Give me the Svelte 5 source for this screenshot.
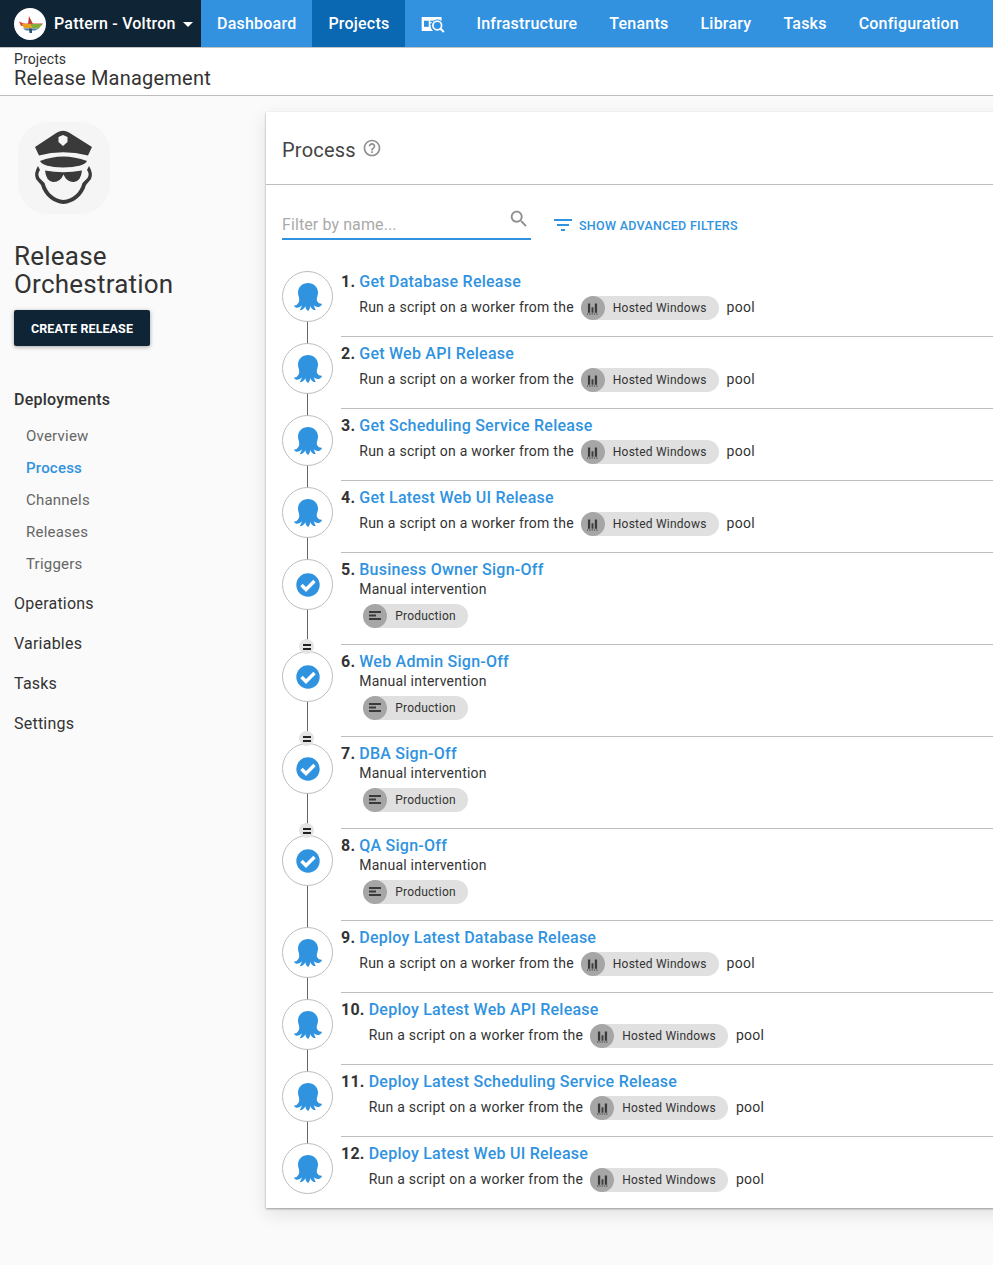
<script>
  const nav = ['Dashboard', 'Projects', '__icon', 'Infrastructure', 'Tenants', 'Library', 'Tasks', 'Configuration'];
  const run = (title) => ({ title, kind: 'run' });
  const manual = (title, parallel = false) => ({ title, kind: 'manual', parallel });
  const steps = [
    run('Get Database Release'),
    run('Get Web API Release'),
    run('Get Scheduling Service Release'),
    run('Get Latest Web UI Release'),
    manual('Business Owner Sign-Off'),
    manual('Web Admin Sign-Off', true),
    manual('DBA Sign-Off', true),
    manual('QA Sign-Off', true),
    run('Deploy Latest Database Release'),
    run('Deploy Latest Web API Release'),
    run('Deploy Latest Scheduling Service Release'),
    run('Deploy Latest Web UI Release')
  ];
  const subnav = ['Overview', 'Process', 'Channels', 'Releases', 'Triggers'];
  const others = ['Operations', 'Variables', 'Tasks', 'Settings'];
</script>

<div class="page">
  <header class="topbar">
    <div class="brand">
      <span class="logo">
        <svg viewBox="0 0 32 32" width="32" height="32">
          <circle cx="16" cy="16" r="16" fill="#fff" />
          <path d="M15 8 L17 12 L19 16 H14 Z" fill="#b8433a" />
          <path d="M5 13.500 L10 15.500 H29 L27 18 H7 Z" fill="#e0483a" />
          <path d="M8 16 H17 L18 20.500 H10 Z" fill="#e8a020" />
          <path d="M17 16 H28 L25 20.500 H18 Z" fill="#7fae3c" />
          <path d="M9 20.500 H25 L21 22.500 H12 Z" fill="#4f7fb0" />
          <path d="M15 20.500 H18 V25 H15.500 Z" fill="#33506e" />
        </svg>
      </span>
      <span class="brand-name">Pattern - Voltron</span>
      <span class="caret"></span>
    </div>
    <nav class="nav">
      {#each nav as item}
        {#if item === '__icon'}
          <span class="nav-item icon-item">
            <svg viewBox="0 0 24 18" width="24" height="17">
              <path d="M0 1 H21 V5.200 A7 7 0 0 0 12 16 H0 Z" fill="#fff" />
              <rect x="2.500" y="5" width="5" height="6.500" fill="#3292df" />
              <rect x="9" y="5" width="3.500" height="1.500" fill="#3292df" />
              <rect x="9" y="8" width="3" height="1.500" fill="#3292df" />
              <circle cx="16.500" cy="10" r="4.600" fill="none" stroke="#fff" stroke-width="1.800" />
              <path d="M20 13.500 L23.500 17" stroke="#fff" stroke-width="2.200" />
            </svg>
          </span>
        {:else}
          <span class="nav-item" class:active={item === 'Projects'}>{item}</span>
        {/if}
      {/each}
    </nav>
  </header>

  <div class="crumbs">
    <div class="crumb">Projects</div>
    <div class="crumb-title">Release Management</div>
  </div>

  <div class="content">
    <aside class="side">
      <div class="avatar">
        <svg viewBox="0 0 92 92" width="92" height="92">
          <rect width="92" height="92" rx="30" fill="#f5f5f5" />
          <path d="M17 25 L39 10.500 Q45 7 51 10.500 L74 25 L70 33.500 Q45 27 21 33.500 Z" fill="#3a3a3a" />
          <path d="M45 13 L49.500 15 V20 L45 24 L40.500 20 V15 Z" fill="#f5f5f5" />
          <path d="M22 39 Q45 30 69 39 Q66 45 45 45.500 Q25 45 22 39 Z" fill="#3a3a3a" />
          <path d="M27 48.500 Q45 52 64 48.500 Q63 59 56 60 Q49 60.500 45.500 52.500 Q42 60.500 35 60 Q28 59 27 48.500 Z" fill="#3a3a3a" />
          <path d="M20 44 Q15.500 51 18 57 L23 63 C26 74 36 81.500 45.500 82 C55 81.500 65 74 68 63 L73 57 Q75.500 51 71 44 L69 48 Q72 52 69.500 56 L64.500 61 C62 71 54 77.500 45.500 78 C37 77.500 29 71 26.500 61 L21.500 56 Q19 52 22 48 Z" fill="#3a3a3a" />
        </svg>
      </div>
      <h1 class="project">Release<br />Orchestration</h1>
      <button class="create">CREATE RELEASE</button>
      <div class="menu-head">Deployments</div>
      <ul class="sub">
        {#each subnav as s}
          <li class:current={s === 'Process'}>{s}</li>
        {/each}
      </ul>
      <ul class="others">
        {#each others as o}
          <li>{o}</li>
        {/each}
      </ul>
    </aside>

    <main class="card">
      <div class="card-head">
        <span class="card-title">Process</span>
        <svg class="help" viewBox="0 0 24 24" width="20" height="20">
          <path d="M11 18h2v-2h-2v2zm1-16C6.480 2 2 6.480 2 12s4.480 10 10 10 10-4.480 10-10S17.520 2 12 2zm0 18c-4.410 0-8-3.590-8-8s3.590-8 8-8 8 3.590 8 8-3.590 8-8 8zm0-14c-2.210 0-4 1.790-4 4h2c0-1.100.9-2 2-2s2 .9 2 2c0 2-3 1.750-3 5h2c0-2.250 3-2.500 3-5 0-2.210-1.790-4-4-4z" fill="#8f8f8f" />
        </svg>
      </div>
      <div class="filters">
        <div class="filter-input">
          <span class="placeholder">Filter by name...</span>
          <svg viewBox="0 0 24 24" class="search">
            <path d="M15.500 14h-.790l-.280-.270C15.410 12.590 16 11.110 16 9.500 16 5.910 13.090 3 9.500 3S3 5.910 3 9.500 5.910 16 9.500 16c1.610 0 3.090-.590 4.230-1.570l.270.280v.790l5 4.990L20.490 19l-4.990-5zm-6 0C7.010 14 5 11.990 5 9.500S7.010 5 9.500 5 14 7.010 14 9.500 11.990 14 9.500 14z" fill="#8f8f8f" />
          </svg>
        </div>
        <div class="advanced">
          <svg viewBox="3 6 18 12" width="18" height="12"><path d="M10 18h4v-2h-4v2zM3 6v2h18V6H3zm3 7h12v-2H6v2z" fill="#2f93e0" /></svg>
          <span>SHOW ADVANCED FILTERS</span>
        </div>
      </div>

      <div class="steps">
        {#each steps as step, i}
          <div class="step">
            <div class="rail" class:last={i === steps.length - 1} class:first={i === 0}>
              {#if step.parallel}<span class="par"><i></i><i></i></span>{/if}
              <span class="circle">
                {#if step.kind === 'run'}
                  <svg viewBox="0 0 28 28" width="28" height="28">
                    <path d="M14 0 C19.500 0 24 4 24 9.500 C24 12.500 22.500 14.500 22.800 17 C23.100 19.500 25.500 21 28 20.800 C27.800 22.800 25.500 24.500 23 24 C21.800 23.800 20.900 23.200 20 22.300 C20.200 24 20.800 25.600 21.800 27 C19.500 27.500 17.300 26 16.300 23 C16 25 15.500 26.800 14 28 C12.200 26.800 11.500 25 11.300 23 C10.500 25.500 8.500 27.300 5.500 27.300 C6.700 25.800 7.500 24.200 7.800 22.300 C6.600 23.700 4.800 24.800 2.800 24.700 C1.500 24.600 .4 23.800 0 22.500 C2.500 22.800 4.800 20.500 5.200 17.500 C5.500 14.500 4 12.500 4 9.500 C4 4 8.500 0 14 0 Z" fill="#2f93e0" />
                  </svg>
                {:else}
                  <svg viewBox="0 0 24 24" width="24" height="24">
                    <circle cx="12" cy="12" r="11.700" fill="#2f93e0" />
                    <path d="M5.500 12 L10 16.500 L18.500 8" fill="none" stroke="#fff" stroke-width="3.400" />
                  </svg>
                {/if}
              </span>
            </div>
            <div class="body" class:tall={step.kind === 'manual'}>
              <span class="num">{i + 1}.</span>
              <div class="detail">
                <div class="title">{step.title}</div>
                {#if step.kind === 'run'}
                  <div class="desc">
                    <span class="desc-text">Run a script on a worker from the</span>
                    <span class="pill">
                      <span class="pill-icon">
                        <svg viewBox="0 0 12 14" width="11" height="13">
                          <path d="M1 1.500 H3.500 V11.500 H1 Z M5 5.500 H7 V11.500 H5 Z M8.500 1.500 H11 V11.500 H8.500 Z" fill="#3a3a3a" />
                          <path d="M0 13 H12" stroke="#3a3a3a" stroke-width="1" stroke-dasharray="1.500 1" />
                        </svg>
                      </span>
                      <span>Hosted Windows</span>
                    </span>
                    <span class="desc-text pool">pool</span>
                  </div>
                {:else}
                  <div class="manual">Manual intervention</div>
                  <div class="env">
                    <span class="pill">
                      <span class="pill-icon">
                        <svg viewBox="0 0 14 12" width="14" height="12">
                          <path d="M1 1 H13 V3 H1 Z M1 4.500 H8 V6.500 H1 Z M1 8 H13 V10 H1 Z" fill="#3a3a3a" />
                        </svg>
                      </span>
                      <span>Production</span>
                    </span>
                  </div>
                {/if}
              </div>
            </div>
          </div>
        {/each}
      </div>
    </main>
  </div>
</div>

<style>
  :global(body) {
    margin: 0;
    background: #fafafa;
    overflow: hidden;
  }
  .page {
    width: 993px;
    height: 1265px;
    overflow: hidden;
    font-family: Roboto, "Liberation Sans", sans-serif;
    letter-spacing: 0.22px;
    color: #333;
    background: #fafafa;
  }
  .topbar {
    display: flex;
    height: 47px;
    background: #3292df;
    color: #fff;
    font-size: 16px;
    font-weight: 500;
  }
  .brand {
    display: flex;
    align-items: center;
    width: 201px;
    flex: none;
    box-sizing: border-box;
    padding-left: 14px;
    background: #0f2535;
  }
  .logo {
    display: flex;
    width: 32px;
    height: 32px;
    margin-right: 8px;
  }
  .brand-name {
    white-space: nowrap;
  }
  .caret {
    margin-left: 7px;
    margin-top: 2px;
    border-left: 5px solid transparent;
    border-right: 5px solid transparent;
    border-top: 5px solid #fff;
  }
  .nav {
    display: flex;
  }
  .nav-item {
    display: flex;
    align-items: center;
    padding: 0 16px;
    white-space: nowrap;
  }
  .nav-item.active {
    background: #0a67b1;
  }
  .icon-item {
    padding: 1px 15.500px 0;
  }
  .crumbs {
    height: 49px;
    box-sizing: border-box;
    padding: 4px 14px 0;
    background: #fff;
    border-top: 1px solid #c4c4c4;
    border-bottom: 1px solid #bdbdbd;
  }
  .crumb {
    font-size: 14px;
    line-height: 15px;
    letter-spacing: 0.1px;
  }
  .crumb-title {
    font-size: 20px;
    line-height: 22px;
  }
  .content {
    display: flex;
    align-items: flex-start;
    padding-top: 16px;
  }
  .side {
    width: 266px;
    flex: none;
    box-sizing: border-box;
    padding: 10px 14px 0;
  }
  .avatar {
    display: flex;
    margin-left: 4px;
  }
  .project {
    margin: 28px 0 0;
    font-size: 26px;
    font-weight: 400;
    line-height: 28px;
  }
  .create {
    display: block;
    margin-top: 12px;
    width: 136px;
    height: 36px;
    padding: 0;
    border: 0;
    border-radius: 2px;
    background: #0f2535;
    color: #fff;
    font: 700 12.500px Roboto, sans-serif;
    letter-spacing: 0.1px;
    box-shadow: 0 1px 4px rgba(0, 0, 0, 0.35);
  }
  .menu-head {
    margin-top: 44px;
    font-size: 16px;
    font-weight: 500;
    line-height: 20px;
  }
  ul {
    list-style: none;
    margin: 0;
    padding: 0;
  }
  .sub {
    margin-top: 10px;
    padding-left: 12px;
    font-size: 15px;
    color: #666;
  }
  .sub li {
    height: 32px;
    line-height: 32px;
  }
  .sub li.current {
    color: #2f93e0;
    font-weight: 500;
  }
  .others {
    margin-top: 4px;
    font-size: 16px;
  }
  .others li {
    height: 40px;
    line-height: 40px;
  }
  .card {
    flex: none;
    width: 760px;
    background: #fff;
    box-shadow: 0 1px 2px rgba(0, 0, 0, 0.35), 0 6px 18px rgba(0, 0, 0, 0.1);
  }
  .card-head {
    display: flex;
    align-items: center;
    height: 73px;
    box-sizing: border-box;
    padding: 3px 16px 0;
    border-bottom: 1px solid #bdbdbd;
  }
  .card-title {
    font-size: 20px;
    color: #444;
  }
  .help {
    margin: -3px 0 0 6px;
  }
  .filters {
    display: flex;
    align-items: flex-end;
    height: 55px;
    padding-left: 16px;
  }
  .filter-input {
    position: relative;
    display: flex;
    align-items: flex-end;
    width: 249px;
    height: 34px;
    box-sizing: border-box;
    padding-bottom: 3px;
    border-bottom: 2px solid #2f93e0;
  }
  .placeholder {
    font-size: 16px;
    color: #aaa;
    line-height: 20px;
    letter-spacing: 0.1px;
  }
  .search {
    position: absolute;
    right: 1px;
    top: 2px;
    width: 22px;
    height: 22px;
  }
  .advanced {
    display: flex;
    align-items: center;
    gap: 7px;
    margin-left: 23px;
    height: 30px;
    color: #2f93e0;
    font-size: 12.500px;
    font-weight: 500;
    letter-spacing: 0.3px;
    white-space: nowrap;
  }
  .steps {
    margin-top: 24px;
  }
  .step {
    display: flex;
    padding-left: 16px;
  }
  .rail {
    position: relative;
    width: 59px;
    flex: none;
    padding-top: 7px;
  }
  .rail::before {
    content: "";
    position: absolute;
    left: 25px;
    top: 0;
    bottom: 0;
    width: 1px;
    background: #666;
  }
  .rail.first::before {
    top: 7px;
  }
  .rail.last::before {
    bottom: auto;
    height: 10px;
  }
  .circle {
    position: relative;
    display: flex;
    align-items: center;
    justify-content: center;
    width: 51px;
    height: 51px;
    box-sizing: border-box;
    border: 1px solid #bdbdbd;
    border-radius: 50%;
    background: #fff;
  }
  .par {
    position: absolute;
    z-index: 1;
    left: 18px;
    top: -5px;
    display: flex;
    flex-direction: column;
    align-items: center;
    justify-content: center;
    gap: 2px;
    width: 15px;
    height: 15px;
    border-radius: 50%;
    background: #e4e4e4;
    transform: translateX(-1px);
  }
  .par i {
    display: block;
    width: 8px;
    height: 2px;
    background: #222;
  }
  .body {
    flex: 1;
    display: flex;
    height: 72px;
    box-sizing: border-box;
    padding-top: 7px;
    border-top: 1px solid #bdbdbd;
  }
  .body.tall {
    height: 92px;
  }
  .step:first-child .body {
    border-top-color: transparent;
  }
  .num {
    font-size: 16px;
    font-weight: 700;
    line-height: 20px;
    margin-right: 4px;
  }
  .title {
    font-size: 16px;
    font-weight: 500;
    line-height: 20px;
    letter-spacing: 0.24px;
    color: #2f93e0;
    white-space: nowrap;
  }
  .desc {
    display: flex;
    align-items: center;
    gap: 7px;
    margin-top: 4px;
    font-size: 14px;
    letter-spacing: 0.25px;
    white-space: nowrap;
  }
  .desc-text {
    margin-top: -2px;
  }
  .pool {
    margin-left: 1px;
  }
  .manual {
    margin-top: -1px;
    font-size: 14px;
    line-height: 20px;
  }
  .env {
    display: flex;
    margin: 5px 0 0 4px;
  }
  .pill {
    display: inline-flex;
    align-items: center;
    height: 24px;
    padding-right: 12px;
    border-radius: 12px;
    background: #e0e0e0;
    font-size: 12px;
    letter-spacing: 0.22px;
    color: #333;
  }
  .pill-icon {
    display: flex;
    align-items: center;
    justify-content: center;
    width: 24px;
    height: 24px;
    margin-right: 8px;
    border-radius: 50%;
    background: #a6a6a6;
  }
</style>
